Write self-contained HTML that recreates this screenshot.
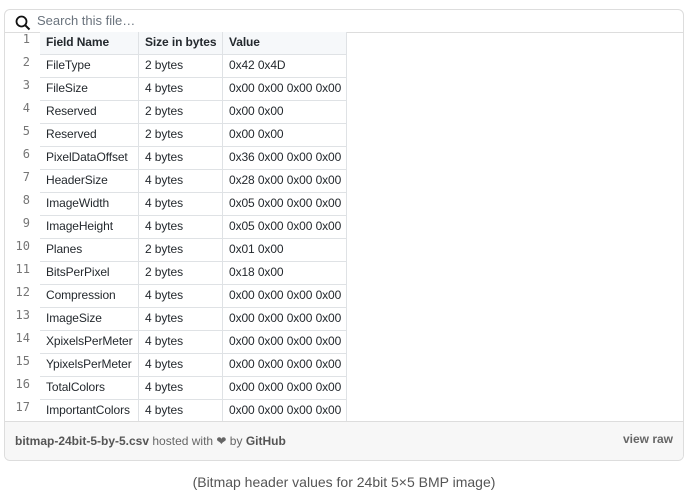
<!DOCTYPE html>
<html><head><meta charset="utf-8"><style>
*{box-sizing:border-box;margin:0;padding:0}
body{width:699px;height:502px;background:#fff;font-family:"Liberation Sans",sans-serif;position:relative;overflow:hidden}
.box{position:absolute;left:4px;top:9px;width:680px;height:452px;border:1px solid #ddd;border-radius:6px;overflow:hidden;background:#fff}
.search{position:absolute;left:0;top:0;width:100%;height:23px;border-bottom:1px solid #ddd}
.search span{position:absolute;left:32px;top:3px;font-size:13px;color:#6a737d;font-family:"Liberation Sans",sans-serif}
.row{position:absolute;left:0;height:23px;width:100%}
.ln{position:absolute;left:0;width:25px;text-align:right;top:0px;font-size:12px;color:#767676;font-family:"DejaVu Sans Mono",monospace}
.c{position:absolute;top:0;height:23px;border-left:1px solid #dfe2e5;border-bottom:1px solid #dfe2e5;font-size:12px;color:#24292e;padding:3px 0 0 6px;white-space:nowrap;letter-spacing:-0.1px}
.c1{left:35px;width:98px;border-left:none}
.c2{left:133px;width:84px}
.c3{left:217px;width:125px;border-right:1px solid #dfe2e5}
.h .c{font-weight:bold;background:#f6f8fa}
.foot{position:absolute;left:0;bottom:0;width:100%;height:39px;background:#f7f7f7;border-top:1px solid #ddd;font-size:12px;color:#666}
.foot .l{position:absolute;left:10px;top:12px}
.foot .r{position:absolute;right:10px;top:10px;font-weight:bold}
b{color:#555}
.cap{position:absolute;top:474px;left:0;width:688px;text-align:center;font-size:14px;color:#555}
</style></head><body>
<div class="box">
<div class="search">
<svg style="position:absolute;left:10px;top:5px" width="16" height="16" viewBox="0 0 16 16"><circle cx="6.5" cy="6.5" r="5" fill="none" stroke="#111" stroke-width="1.8"/><line x1="10.2" y1="10.2" x2="14.5" y2="14.5" stroke="#111" stroke-width="2"/></svg>
<span>Search this file…</span></div>
<div id="rows"></div>
<div class="foot"><div class="l"><b>bitmap-24bit-5-by-5.csv</b> hosted with ❤ by <b>GitHub</b></div><div class="r">view raw</div></div>
</div>
<div class="cap">(Bitmap header values for 24bit 5×5 BMP image)</div>
<script>
var d=[["Field Name","Size in bytes","Value"],["FileType","2 bytes","0x42 0x4D"],["FileSize","4 bytes","0x00 0x00 0x00 0x00"],["Reserved","2 bytes","0x00 0x00"],["Reserved","2 bytes","0x00 0x00"],["PixelDataOffset","4 bytes","0x36 0x00 0x00 0x00"],["HeaderSize","4 bytes","0x28 0x00 0x00 0x00"],["ImageWidth","4 bytes","0x05 0x00 0x00 0x00"],["ImageHeight","4 bytes","0x05 0x00 0x00 0x00"],["Planes","2 bytes","0x01 0x00"],["BitsPerPixel","2 bytes","0x18 0x00"],["Compression","4 bytes","0x00 0x00 0x00 0x00"],["ImageSize","4 bytes","0x00 0x00 0x00 0x00"],["XpixelsPerMeter","4 bytes","0x00 0x00 0x00 0x00"],["YpixelsPerMeter","4 bytes","0x00 0x00 0x00 0x00"],["TotalColors","4 bytes","0x00 0x00 0x00 0x00"],["ImportantColors","4 bytes","0x00 0x00 0x00 0x00"]];
var h="";d.forEach(function(r,i){h+='<div class="row'+(i==0?' h':'')+'" style="top:'+(22+23*i)+'px"><div class="ln">'+(i+1)+'</div><div class="c c1">'+r[0]+'</div><div class="c c2">'+r[1]+'</div><div class="c c3">'+r[2]+'</div></div>'});
document.getElementById("rows").innerHTML=h;
</script>
</body></html>
